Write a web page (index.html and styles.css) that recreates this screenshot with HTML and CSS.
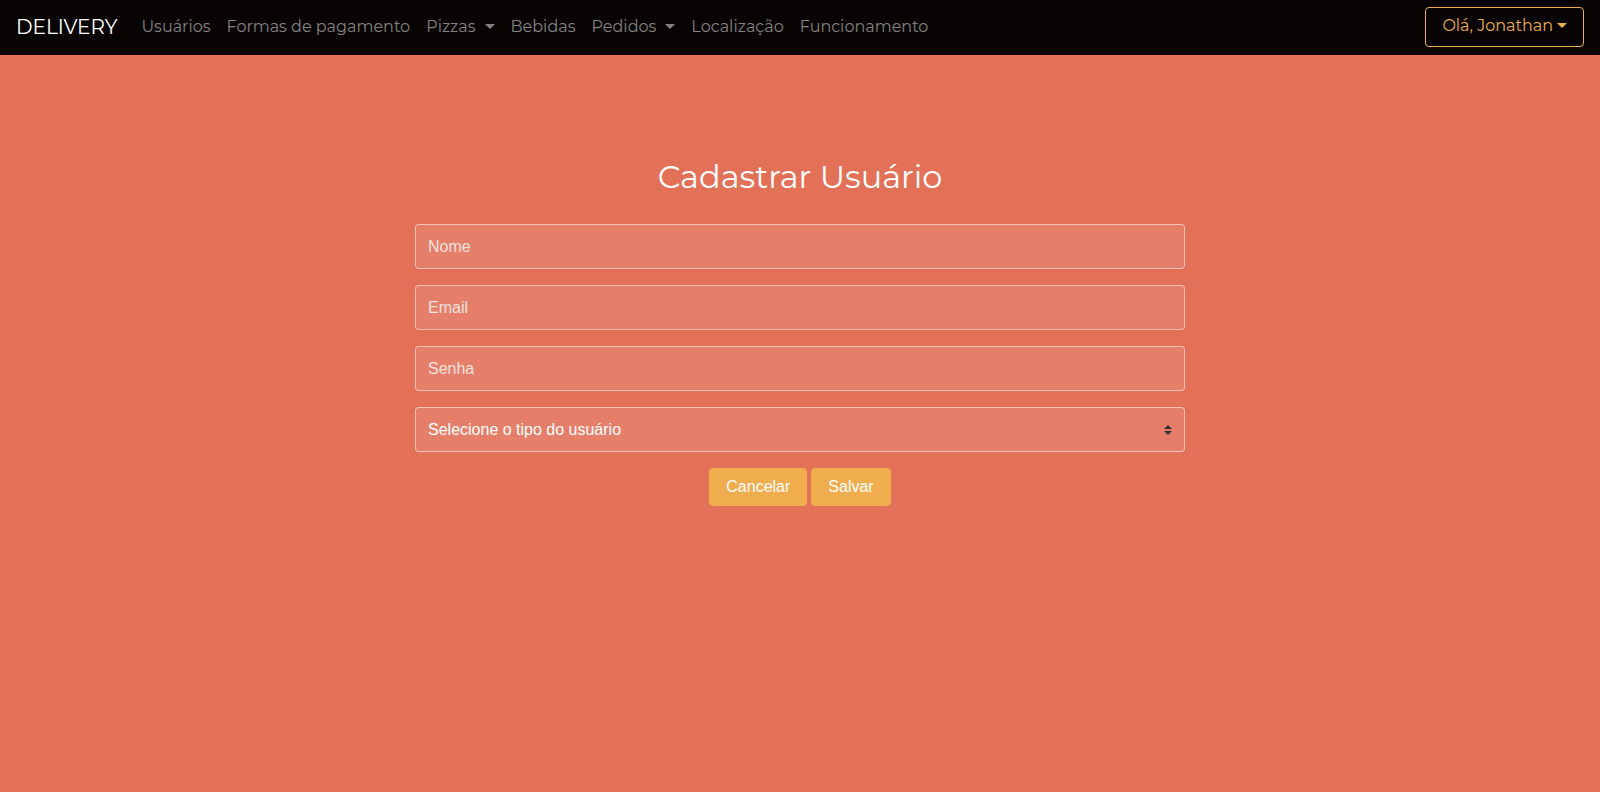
FILE: index.html
```html
<!DOCTYPE html>
<html lang="pt-BR">
<head>
<meta charset="utf-8">
<meta name="viewport" content="width=device-width, initial-scale=1">
<title>Cadastrar Usuário</title>
<link rel="stylesheet" href="styles.css">
</head>
<body>
<header class="navbar">
  <a class="brand" href="#">DELIVERY</a>
  <nav class="nav">
    <a class="nav-link" href="#">Usuários</a>
    <a class="nav-link" href="#">Formas de pagamento</a>
    <a class="nav-link caret wide" href="#">Pizzas</a>
    <a class="nav-link" href="#">Bebidas</a>
    <a class="nav-link caret wide" href="#">Pedidos</a>
    <a class="nav-link" href="#">Localização</a>
    <a class="nav-link" href="#">Funcionamento</a>
  </nav>
  <button class="user-menu caret" type="button">Olá, Jonathan</button>
</header>
<main class="content">
  <h1 class="title">Cadastrar Usuário</h1>
  <form class="form">
    <input class="field" type="text" placeholder="Nome" aria-label="Nome">
    <input class="field" type="email" placeholder="Email" aria-label="Email">
    <input class="field" type="password" placeholder="Senha" aria-label="Senha">
    <div class="select-wrap">
      <select class="field select" aria-label="Tipo do usuário">
        <option>Selecione o tipo do usuário</option>
      </select>
      <svg class="select-arrows" viewBox="0 0 8 10" aria-hidden="true"><path d="M4 0L0 4h8zM4 10L0 6h8z"/></svg>
    </div>
    <div class="actions">
      <button class="btn" type="button">Cancelar</button>
      <button class="btn" type="submit">Salvar</button>
    </div>
  </form>
</main>
</body>
</html>
```
FILE: styles.css
```css
* { box-sizing: border-box; }

body {
  margin: 0;
  min-height: 100vh;
  background: #e27158;
  color: #fff;
  font: 16px/24px "Liberation Sans", Arial, sans-serif;
}

.navbar {
  display: flex;
  align-items: center;
  padding: 7px 16px 8px;
  background: #080404;
  font-family: Montserrat, Inter, sans-serif;
}

.brand {
  margin-right: 16px;
  color: #fff;
  font-size: 20px;
  font-weight: 400;
  text-decoration: none;
}

.nav {
  display: flex;
  flex-grow: 1;
}

.nav-link {
  padding: 7px 8px 8px;
  color: #848281;
  font-size: 16px;
  text-decoration: none;
  white-space: nowrap;
}

.caret::after {
  content: "";
  display: inline-block;
  margin-left: 4px;
  vertical-align: 3px;
  border: 5px solid transparent;
  border-top-color: currentColor;
  border-bottom: 0;
}

.wide::after { margin-left: 9px; }

.user-menu {
  padding: 6px 16px 8px;
  border: 1px solid #f0ad4e;
  border-radius: 4px;
  background: transparent;
  color: #f0ad4e;
  font: 16px/24px Montserrat, Inter, sans-serif;
}

.content {
  max-width: 802px;
  margin: 0 auto;
  padding: 103px 16px 32px;
}

.title {
  margin: 0 0 28px;
  font: 400 32px/38px Montserrat, Inter, sans-serif;
  text-align: center;
}

.form {
  display: flex;
  flex-direction: column;
  gap: 16px;
}

.field {
  display: block;
  width: 100%;
  height: 45px;
  padding: 0 12px;
  border: 1px solid rgba(255, 255, 255, 0.5);
  border-radius: 4px;
  background: rgba(255, 255, 255, 0.1);
  color: #fff;
  font: 16px/24px "Liberation Sans", Arial, sans-serif;
}

.field::placeholder {
  color: #f1e2df;
  opacity: 1;
}

.select-wrap { position: relative; }

.select { appearance: none; }

.select option { color: #333; }

.select-arrows {
  position: absolute;
  top: 18px;
  right: 13px;
  width: 8px;
  height: 10px;
  fill: #333;
  pointer-events: none;
}

.actions {
  display: flex;
  justify-content: center;
  gap: 4px;
}

.btn {
  padding: 6px 16px;
  border: 1px solid #f0ad4e;
  border-radius: 4px;
  background: #f0ad4e;
  color: #fff;
  font: 16px/24px "Liberation Sans", Arial, sans-serif;
}
```
